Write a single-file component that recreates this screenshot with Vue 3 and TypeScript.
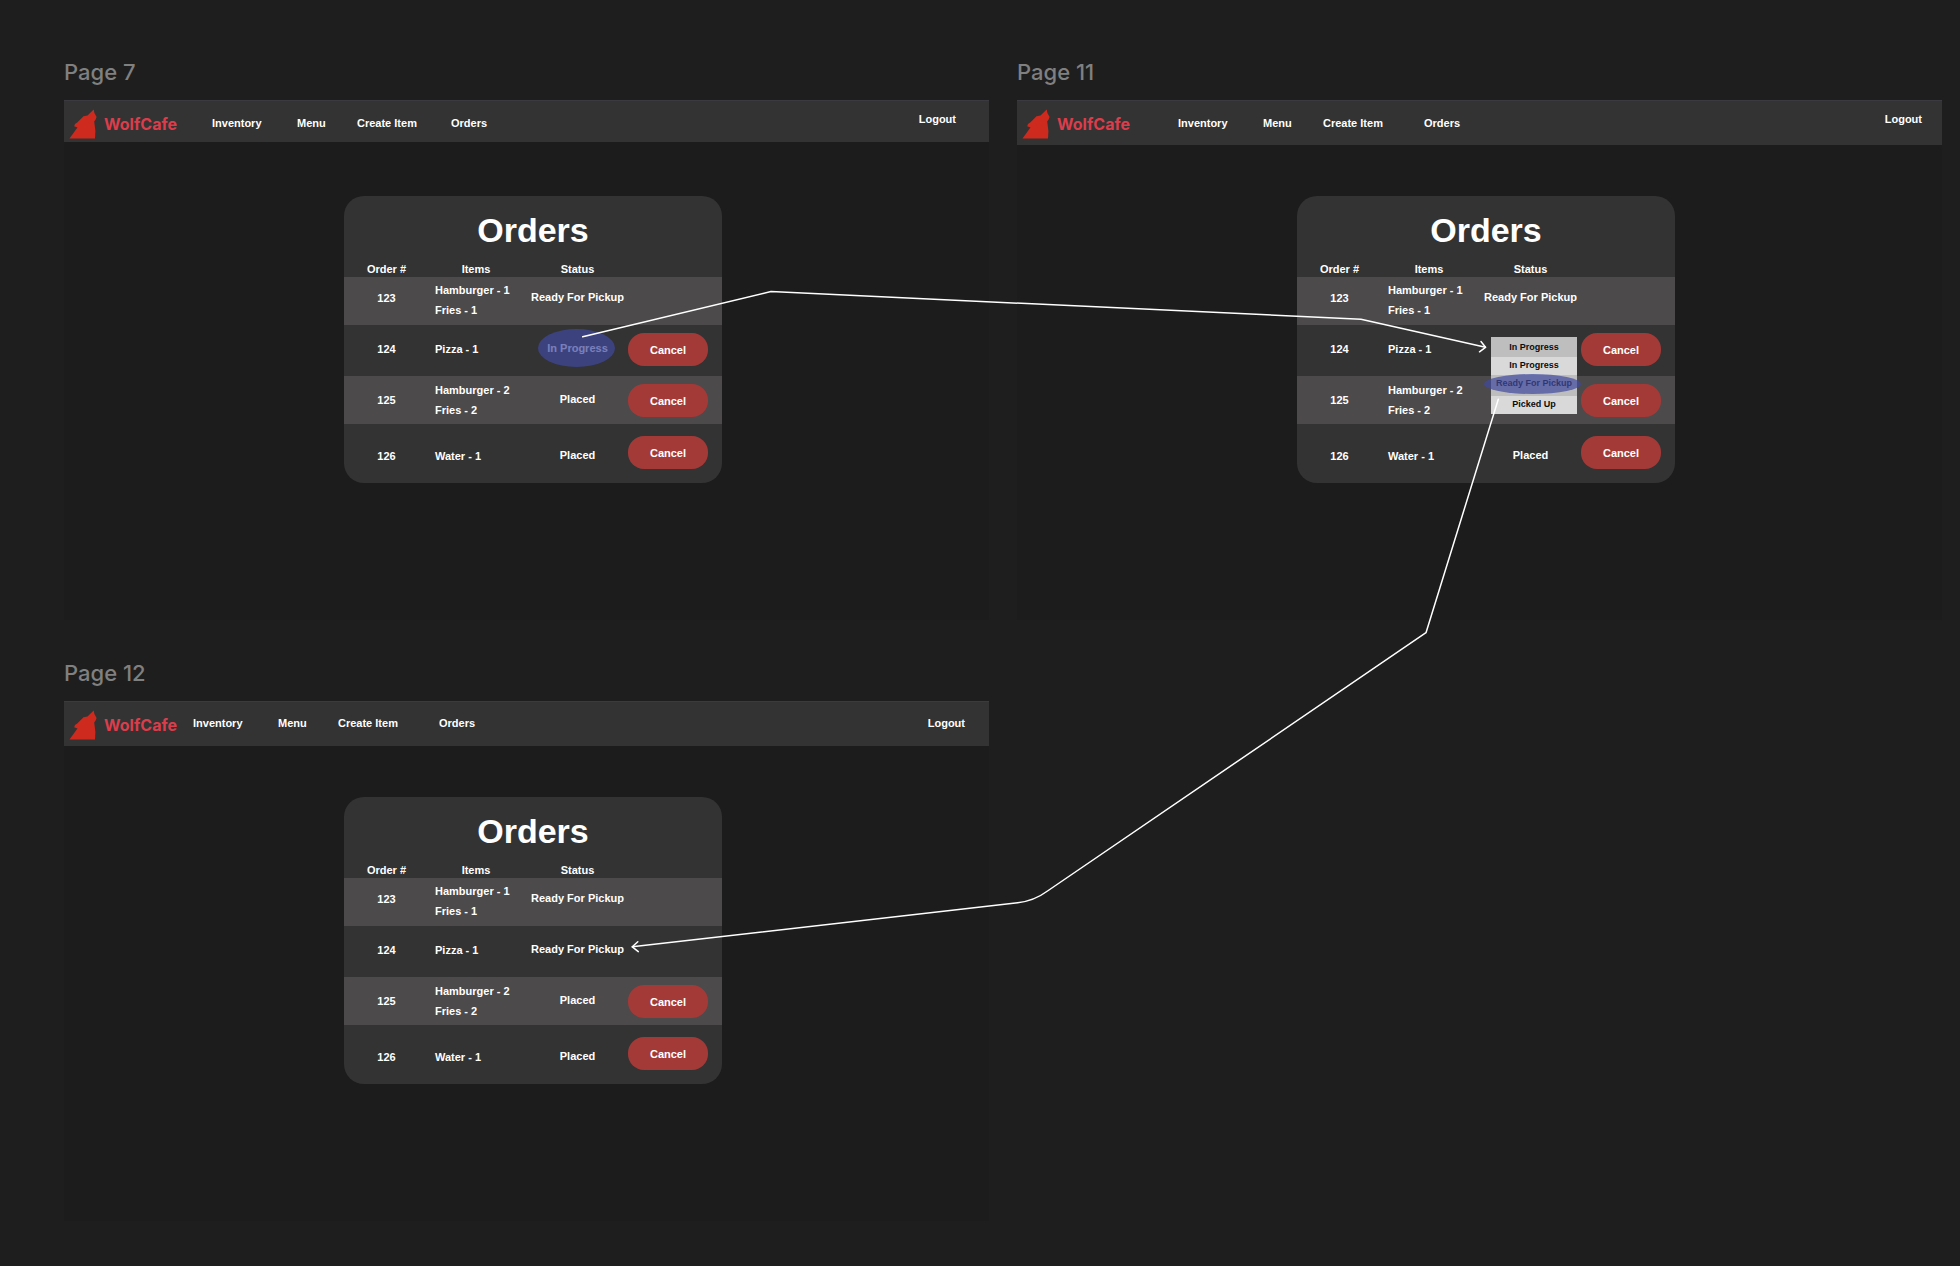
<script setup lang="ts">
interface Order {
  id: number
  items: string[]
  status: string
  highlighted?: boolean
  editing?: boolean
  cancellable?: boolean
}

interface Frame {
  key: string
  label: string
  orders: Order[]
}

const links: string[] = ['Inventory', 'Menu', 'Create Item', 'Orders']
const choices: string[] = ['In Progress', 'Ready For Pickup', 'Picked Up']

function buildOrders(second: Partial<Order>, third: Partial<Order> = {}): Order[] {
  return [
    { id: 123, items: ['Hamburger - 1', 'Fries - 1'], status: 'Ready For Pickup' },
    { id: 124, items: ['Pizza - 1'], status: 'In Progress', ...second },
    { id: 125, items: ['Hamburger - 2', 'Fries - 2'], status: 'Placed', cancellable: true, ...third },
    { id: 126, items: ['Water - 1'], status: 'Placed', cancellable: true },
  ]
}

const frames: Frame[] = [
  { key: 'page-7', label: 'Page 7', orders: buildOrders({ highlighted: true, cancellable: true }) },
  { key: 'page-11', label: 'Page 11', orders: buildOrders({ editing: true, cancellable: true }, { status: '' }) },
  { key: 'page-12', label: 'Page 12', orders: buildOrders({ status: 'Ready For Pickup' }) },
]
</script>

<template>
  <main class="canvas">
    <section v-for="frame in frames" :key="frame.key" :class="frame.key">
      <h2 class="label">{{ frame.label }}</h2>
      <div class="frame">
        <header class="bar">
          <a class="brand" href="#">
            <svg class="wolf" viewBox="0 0 28 30" aria-hidden="true">
              <path
                d="M0.5 29.5 L7 20.5 L8.5 18.5 L5.2 17.3 L6 15 L8.5 13.2 L14.5 7.3 L18.5 6.6 L24.7 0.6 L25.4 4 L27.6 8 L26.6 10.4 L25.2 12.4 L25.8 17 L26.4 22 L26 29.5 Z"
              />
            </svg>
            <span>WolfCafe</span>
          </a>
          <nav class="links">
            <a v-for="link in links" :key="link" href="#">{{ link }}</a>
          </nav>
          <a class="logout" href="#">Logout</a>
        </header>

        <div class="content">
          <article class="card">
            <h1>Orders</h1>
            <table>
              <colgroup>
                <col class="col-id" />
                <col class="col-items" />
                <col class="col-status" />
                <col />
              </colgroup>
              <thead>
                <tr>
                  <th scope="col">Order #</th>
                  <th scope="col">Items</th>
                  <th scope="col" class="status-head">Status</th>
                  <td></td>
                </tr>
              </thead>
              <tbody>
                <tr v-for="order in frame.orders" :key="order.id" :class="'order-' + order.id">
                  <td class="id">{{ order.id }}</td>
                  <td class="items">
                    <div v-for="item in order.items" :key="item">{{ item }}</div>
                  </td>
                  <td class="status">
                    <div v-if="order.editing" class="dropdown">
                      <button type="button" class="trigger" aria-haspopup="listbox" aria-expanded="true">
                        {{ order.status }}
                      </button>
                      <ul role="listbox" aria-label="Order status">
                        <li
                          v-for="choice in choices"
                          :key="choice"
                          role="option"
                          :class="{ picked: choice === 'Ready For Pickup' }"
                          :aria-selected="choice === 'Ready For Pickup'"
                        >
                          {{ choice }}
                        </li>
                      </ul>
                    </div>
                    <span v-else :class="{ marked: order.highlighted }">{{ order.status }}</span>
                  </td>
                  <td class="action">
                    <button v-if="order.cancellable" type="button" class="cancel">Cancel</button>
                  </td>
                </tr>
              </tbody>
            </table>
          </article>
        </div>
      </div>
    </section>

    <svg class="flows" viewBox="0 0 1960 1266" preserveAspectRatio="none" aria-hidden="true">
      <path d="M582.7 336.7 L771 291.5 L1361 319.3 L1485.5 347.3" />
      <path d="M1481 341.5 L1485.5 347.3 L1479.5 351.8" />
      <path d="M1498.3 399.3 L1426 632.7 L1047.5 891 Q1034 901 1017.7 902.7 L632.3 946.8" />
      <path d="M637.8 941.8 L632.3 946.8 L638.3 951.6" />
    </svg>
  </main>
</template>

<style>
body {
  margin: 0;
  background: #1e1e1e;
}
</style>

<style scoped>
.canvas {
  position: relative;
  box-sizing: border-box;
  display: grid;
  grid-template-columns: 1fr 1fr;
  gap: 39px 28px;
  padding: 58px 18px 45px 64px;
  background: #1e1e1e;
  color: #fff;
  font: bold 11px/20px "Liberation Sans", Arial, sans-serif;
}

.label {
  margin: 0 0 14px;
  color: #808080;
  font: 500 22px/28px Inter, sans-serif;
}

.frame {
  min-height: 520px;
  background: #1c1c1c;
}

.bar {
  box-sizing: border-box;
  display: flex;
  align-items: flex-start;
  height: 45px;
  border-top: 1px solid #3a3a40;
  background: #333;
  line-height: 16px;
}

.page-7 .bar {
  height: 42px;
}

.bar a {
  color: #fff;
  text-decoration: none;
}

.bar .brand {
  display: flex;
  flex: 0 0 124px;
  gap: 7px;
  padding: 8px 0 0 5px;
  color: #dc3d4b;
  font: 700 16px/30px Inter, sans-serif;
}

.wolf {
  width: 28px;
  height: 30px;
  fill: #cf2a1e;
}

.links {
  display: grid;
  grid-template-columns: 85px 60px 101px auto;
  padding-top: 14px;
}

.page-7 .links {
  grid-template-columns: 85px 60px 94px auto;
  margin-left: 19px;
}

.page-11 .links {
  margin-left: 32px;
}

.logout {
  margin-left: auto;
  padding: 10px 20px 0 0;
}

.page-7 .logout {
  padding-right: 33px;
}

.page-12 .links {
  padding-top: 13px;
}

.page-12 .logout {
  padding: 13px 24px 0 0;
}

.content {
  padding: 51px 0 0 13px;
}

.page-7 .content {
  padding-top: 54px;
}

.card {
  width: 378px;
  margin: 0 auto;
  border-radius: 20px;
  background: #333;
}

h1 {
  margin: 0;
  padding: 14px 0 10px;
  font-size: 34px;
  line-height: 41px;
  text-align: center;
}

table {
  width: 100%;
  table-layout: fixed;
  border-collapse: collapse;
}

.col-id {
  width: 85px;
}

.col-items {
  width: 94px;
}

.col-status {
  width: 105px;
}

th,
td {
  padding: 0;
  vertical-align: top;
  text-align: center;
}

th {
  height: 16px;
  line-height: 16px;
}

tbody tr:nth-child(odd) {
  background: #4c4a4b;
}

.order-123 {
  --text-top: 11px;
  --items-top: 3px;
  height: 48px;
}

.order-124 {
  --text-top: 14px;
  --items-top: 14px;
  --action-top: 8px;
  height: 51px;
}

.order-125 {
  --text-top: 14px;
  --items-top: 4px;
  --action-top: 8px;
  height: 48px;
}

.order-126 {
  --text-top: 22px;
  --items-top: 22px;
  --action-top: 12px;
  height: 59px;
}

.id {
  padding-top: var(--text-top);
}

.items {
  padding: var(--items-top) 0 0 6px;
  text-align: left;
}

.status {
  position: relative;
  padding: calc(var(--text-top) - 1px) 0 0 4px;
}

.status-head {
  padding-left: 4px;
}

.action {
  padding-top: var(--action-top);
  text-align: left;
}

.cancel {
  display: block;
  width: 80px;
  height: 33px;
  padding: 0;
  border: 0;
  border-radius: 16px;
  background: #a33a38;
  color: #fff;
  font: inherit;
}

.marked::after {
  content: "";
  position: absolute;
  top: 4px;
  left: 15px;
  width: 77px;
  height: 38px;
  border-radius: 50%;
  background: rgba(64, 72, 158, 0.7);
}

.dropdown {
  position: absolute;
  z-index: 1;
  top: 12px;
  left: 15px;
  width: 86px;
  color: #0c0c0c;
  font-size: 9px;
  line-height: 17px;
}

.trigger {
  display: block;
  width: 100%;
  height: 20px;
  padding: 0;
  border: 0;
  background: #bebebe;
  color: inherit;
  font: inherit;
}

.dropdown ul {
  margin: 0;
  padding: 0;
  list-style: none;
}

.dropdown li {
  height: 18px;
  background: #d9d9d9;
  white-space: nowrap;
}

.dropdown .picked {
  position: relative;
  height: 21px;
  background: #bebebe;
}

.picked::after {
  content: "";
  position: absolute;
  inset: -1px -4px 2px -7px;
  border-radius: 50%;
  background: rgba(64, 72, 158, 0.7);
}

.flows {
  position: absolute;
  inset: 0;
  z-index: 2;
  width: 100%;
  height: 100%;
  fill: none;
  stroke: #fff;
  stroke-width: 1.5;
  stroke-linecap: round;
  stroke-linejoin: round;
  pointer-events: none;
}
</style>
